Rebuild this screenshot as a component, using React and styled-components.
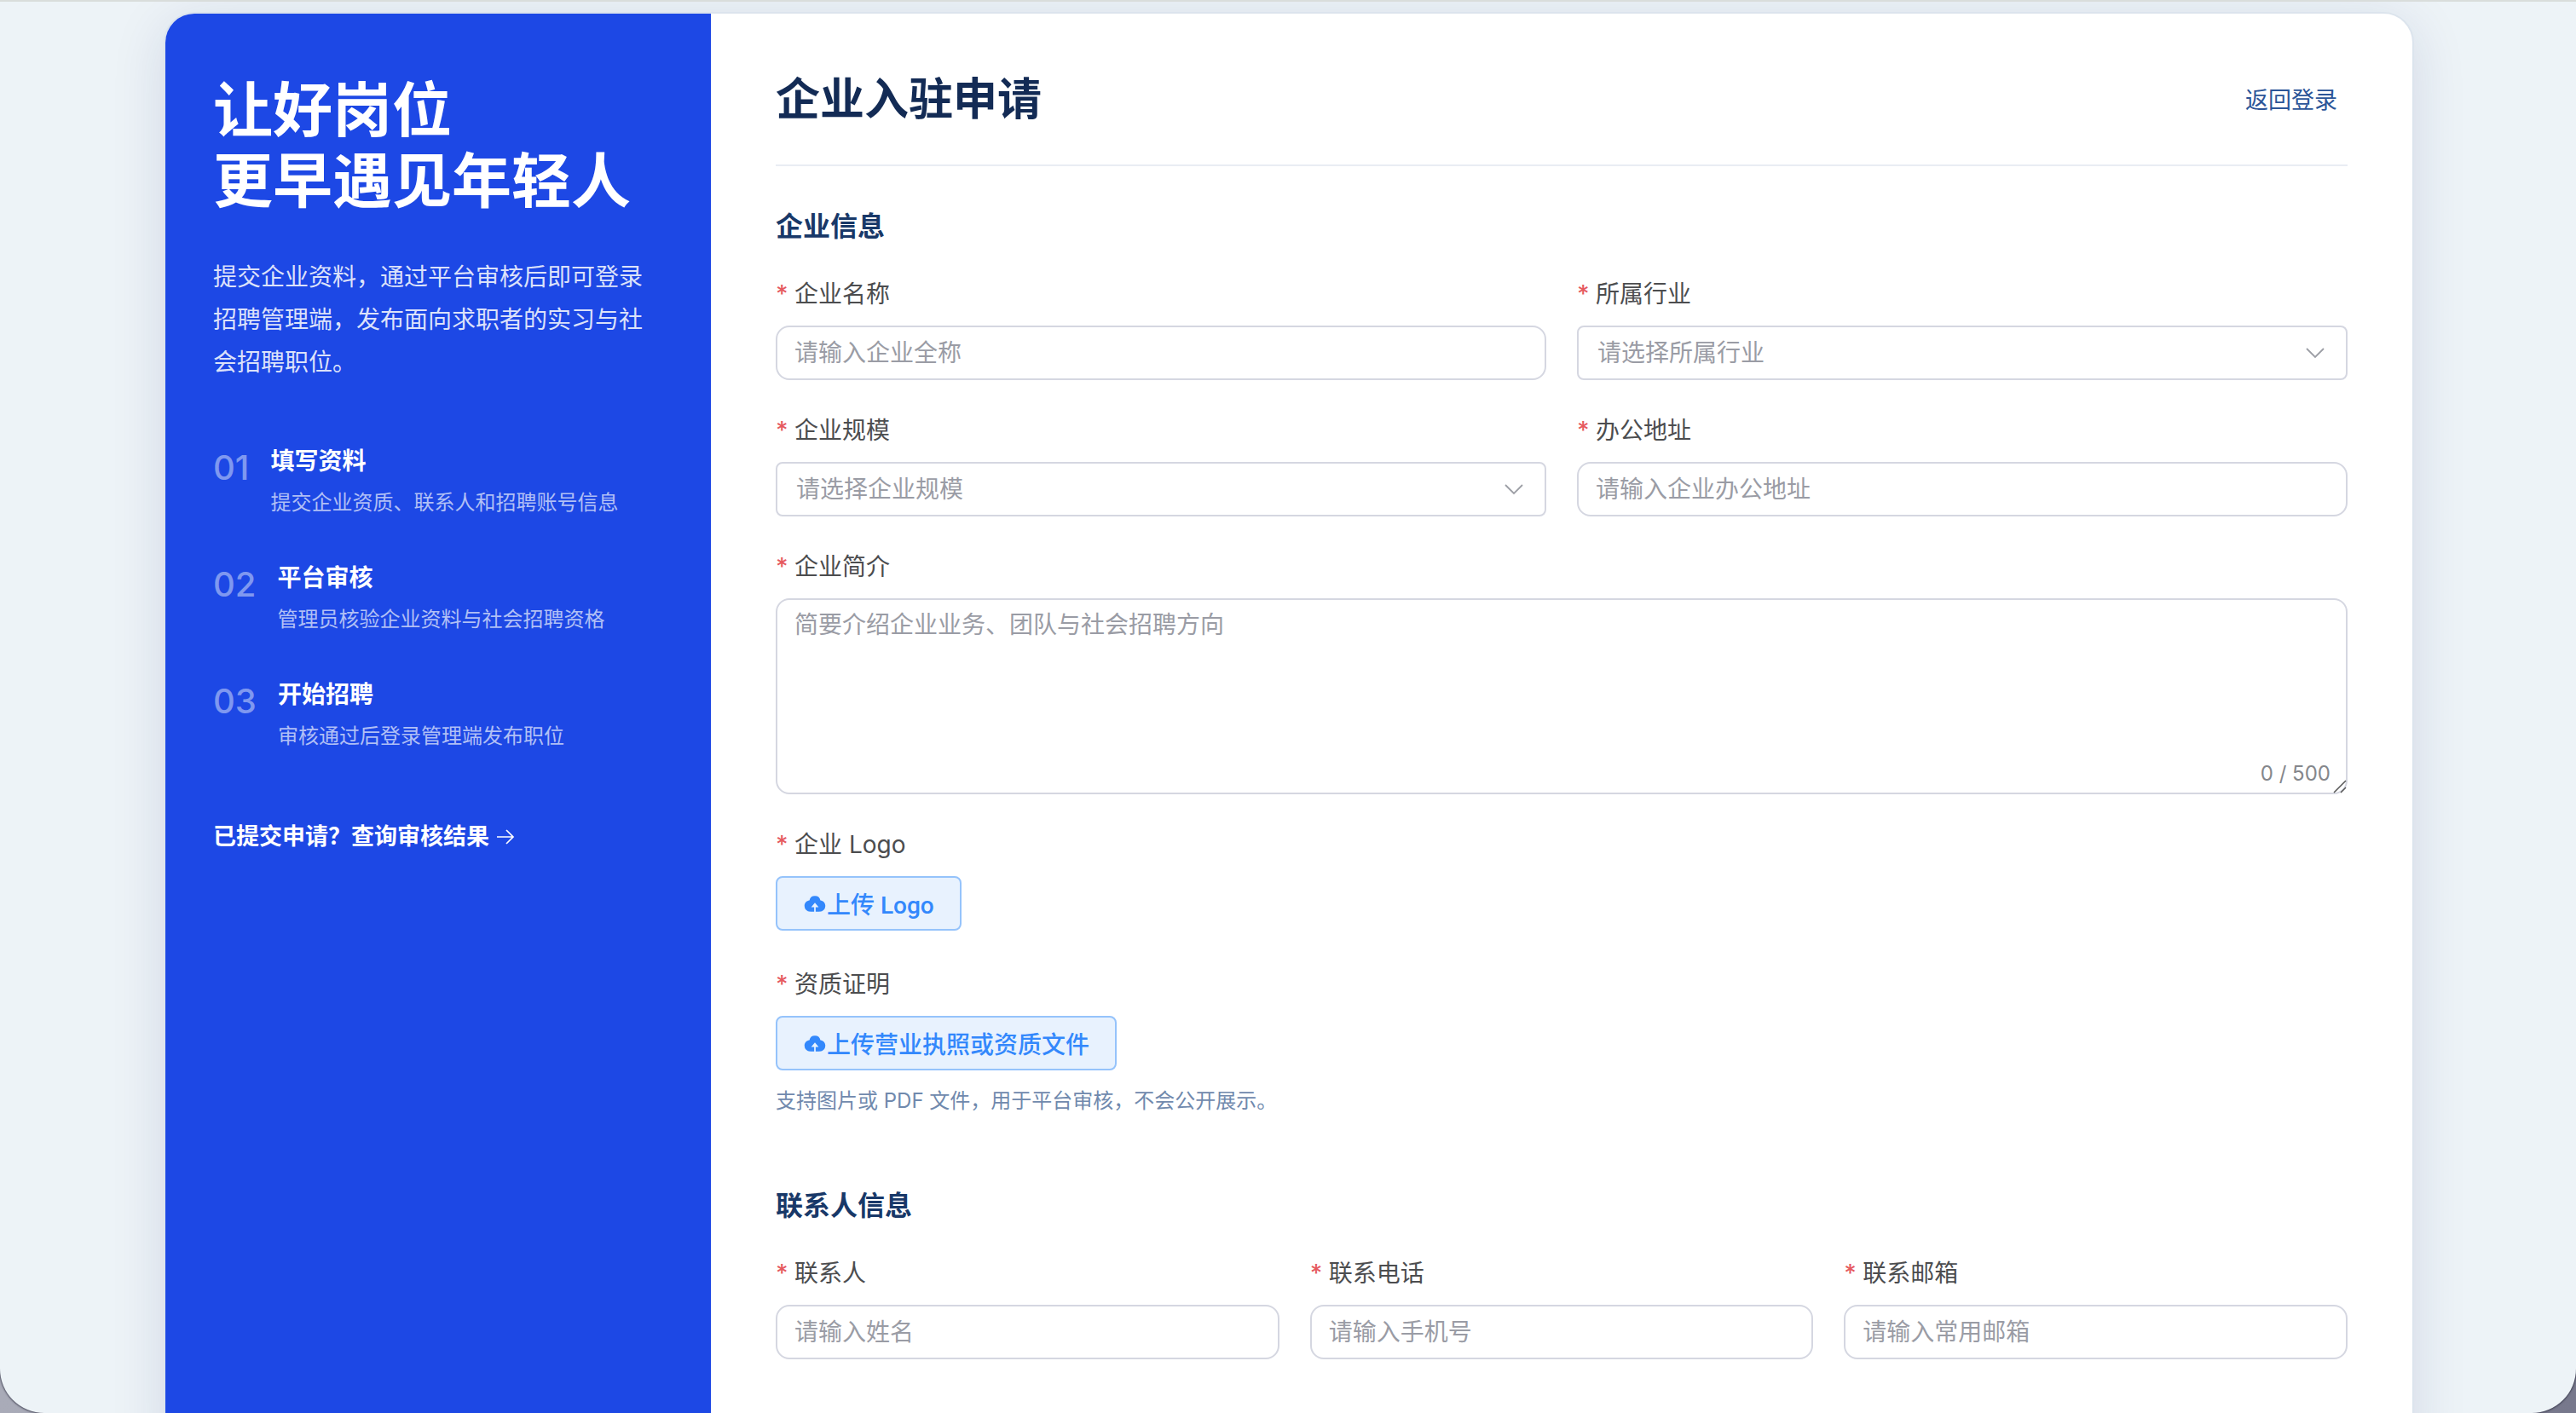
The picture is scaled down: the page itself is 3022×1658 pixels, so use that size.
import React from 'react';
import styled, { createGlobalStyle } from 'styled-components';

const GlobalStyle = createGlobalStyle`
  * {
    box-sizing: border-box;
  }

  body {
    margin: 0;
    background: linear-gradient(to right, #a9abb8, #77788c);
    font-family: Inter, 'Noto Sans CJK SC', sans-serif;
  }

  h1, h2, h3, p, ol {
    margin: 0;
    padding: 0;
  }

  input, select, textarea, button {
    font-family: inherit;
  }
`;

const Page = styled.div`
  height: 100vh;
  overflow: hidden;
  padding: 12px 190px 0 192px;
  border-top: 2px solid #d9dddb;
  border-radius: 0 0 52px 52px;
  background: #edf3f7;
  box-shadow: 0 0 2px 1px rgba(40, 42, 60, 0.7);
`;

const Card = styled.div`
  display: grid;
  grid-template-columns: 640px 1fr;
  overflow: hidden;
  border: 2px solid #dce4ed;
  border-radius: 36px;
  background: #fff;
  box-shadow: 0 12px 64px rgba(28, 36, 110, 0.12);
`;

const Aside = styled.aside`
  padding: 72px 56px;
  background: #1d48e5;
  color: #fff;
`;

const Slogan = styled.h1`
  font-size: 70px;
  font-weight: 700;
  line-height: 83px;
`;

const Intro = styled.p`
  margin-top: 46px;
  font-size: 28px;
  line-height: 50px;
  color: rgba(255, 255, 255, 0.86);
`;

const Steps = styled.ol`
  display: flex;
  flex-direction: column;
  gap: 40px;
  margin-top: 67px;
  list-style: none;
`;

const Step = styled.li`
  display: flex;
  gap: 25px;

  h3 {
    font-size: 28px;
    font-weight: 700;
    line-height: 48px;
  }

  p {
    font-size: 24px;
    line-height: 49px;
    color: rgba(255, 255, 255, 0.66);
  }
`;

const StepNumber = styled.span`
  font-size: 40px;
  font-weight: 500;
  line-height: 64px;
  color: rgba(255, 255, 255, 0.44);
`;

const ResultLink = styled.a`
  display: flex;
  align-items: center;
  gap: 8px;
  margin-top: 74px;
  font-size: 27px;
  font-weight: 700;
  line-height: 40px;
  color: #fff;
  text-decoration: none;
`;

const Main = styled.main`
  padding: 60px 76px 120px;
`;

const Header = styled.header`
  display: flex;
  align-items: center;
  justify-content: space-between;
  padding-bottom: 35px;
  border-bottom: 2px solid #e9edf3;

  h2 {
    font-size: 52px;
    font-weight: 700;
    line-height: 82px;
    color: #132b55;
  }

  a {
    padding: 0 12px 4px;
    font-size: 27px;
    color: #2b5598;
    text-decoration: none;
  }
`;

const Section = styled.section`
  margin-top: ${props => props.$gap}px;

  > h3 {
    margin-bottom: 36px;
    font-size: 32px;
    font-weight: 700;
    line-height: 40px;
    color: #183868;
  }
`;

const Grid = styled.div`
  display: grid;
  grid-template-columns: repeat(${props => props.$columns}, 1fr);
  gap: 36px;
`;

const Field = styled.div`
  grid-column: ${props => (props.$wide ? '1 / -1' : 'auto')};
  padding-bottom: ${props => (props.$upload ? 4 : 0)}px;
`;

const Label = styled.label`
  display: flex;
  gap: 6px;
  margin-bottom: 14px;
  font-size: 28px;
  line-height: 46px;
  color: #4c4d4f;

  &::before {
    content: '*';
    width: 16px;
    font-weight: 500;
    color: #e65a5f;
  }
`;

const Input = styled.input`
  display: block;
  width: 100%;
  height: 64px;
  padding: 0 20px;
  border: 2px solid #d5d7e1;
  border-radius: 16px;
  background: #fff;
  font-size: 28px;

  &::placeholder {
    color: #9a9ca5;
    opacity: 1;
  }
`;

const SelectBox = styled.div`
  display: grid;
  align-items: center;

  > * {
    grid-area: 1 / 1;
  }

  svg {
    justify-self: end;
    margin-right: 24px;
    pointer-events: none;
  }
`;

const Select = styled.select`
  appearance: none;
  width: 100%;
  height: 64px;
  padding: 0 22px;
  border: 2px solid #d5d7e1;
  border-radius: 8px;
  background: #fff;
  font-size: 28px;
  color: #9a9ca5;
`;

const TextareaBox = styled.div`
  position: relative;

  svg {
    position: absolute;
    right: 1px;
    bottom: 1px;
    pointer-events: none;
  }
`;

const Textarea = styled.textarea`
  display: block;
  width: 100%;
  height: 230px;
  padding: 8px 20px;
  border: 2px solid #d5d7e1;
  border-radius: 16px;
  resize: none;
  font-size: 28px;
  line-height: 42px;

  &::placeholder {
    color: #9a9ca5;
    opacity: 1;
  }
`;

const Counter = styled.span`
  position: absolute;
  right: 20px;
  bottom: 10px;
  font-size: 24px;
  line-height: 28px;
  color: #85878c;
`;

const UploadButton = styled.button`
  display: flex;
  align-items: center;
  height: 64px;
  padding: 0 30px;
  border: 2px solid #95c3fb;
  border-radius: 8px;
  background: #e8f2fe;
  font-family: Roboto, 'Noto Sans CJK SC', sans-serif;
  font-size: 28px;
  font-weight: 500;
  color: #3388fc;
`;

const Hint = styled.p`
  margin-top: 18px;
  font-size: 24px;
  line-height: 36px;
  color: #7089ad;
`;

const steps = [
  { number: '01', title: '填写资料', text: '提交企业资质、联系人和招聘账号信息' },
  { number: '02', title: '平台审核', text: '管理员核验企业资料与社会招聘资格' },
  { number: '03', title: '开始招聘', text: '审核通过后登录管理端发布职位' }
];

const contacts = [
  { id: 'contact', label: '联系人', placeholder: '请输入姓名', type: 'text' },
  { id: 'phone', label: '联系电话', placeholder: '请输入手机号', type: 'tel' },
  { id: 'email', label: '联系邮箱', placeholder: '请输入常用邮箱', type: 'email' }
];

const ArrowDown = () => (
  <svg width='28' height='28' viewBox='0 0 28 28' fill='none' stroke='#9c9ea5' strokeWidth='1.8'>
    <path d='M4 9 L14 19 L24 9' />
  </svg>
);

const ArrowRight = () => (
  <svg width='22' height='22' viewBox='0 0 22 22' fill='none' stroke='#fff' strokeWidth='1.7'>
    <path d='M1 11 H20 M12 3 L20 11 L12 19' />
  </svg>
);

const UploadIcon = () => (
  <svg width='28' height='28' viewBox='0 0 1024 1024' fill='currentColor'>
    <path d='M544 864V672h128L512 480 352 672h128v192H320v-1.6c-5.376.32-10.496 1.6-16 1.6A240 240 0 0 1 64 624c0-123.136 93.12-223.488 212.608-237.248A239.808 239.808 0 0 1 512 192a239.872 239.872 0 0 1 235.456 194.752c119.488 13.76 212.48 114.112 212.48 237.248a240 240 0 0 1-240 240c-5.376 0-10.56-1.28-16-1.6v1.6z' />
  </svg>
);

const SelectField = ({ id, label, placeholder }) => (
  <Field>
    <Label htmlFor={id}>{label}</Label>
    <SelectBox>
      <Select id={id} name={id} defaultValue=''>
        <option value=''>{placeholder}</option>
      </Select>
      <ArrowDown />
    </SelectBox>
  </Field>
);

const InputField = ({ id, label, placeholder, type }) => (
  <Field>
    <Label htmlFor={id}>{label}</Label>
    <Input id={id} name={id} type={type || 'text'} placeholder={placeholder} />
  </Field>
);

class App extends React.Component {
  constructor(props) {
    super(props);
    this.state = {
      profile: ''
    }
    this.handleProfile = this.handleProfile.bind(this);
  }

  handleProfile(e) {
    this.setState({ profile: e.target.value });
  }

  render() {
    return (
      <Page>
        <GlobalStyle />
        <Card>
          <Aside>
            <Slogan>让好岗位<br/>更早遇见年轻人</Slogan>
            <Intro>提交企业资料，通过平台审核后即可登录招聘管理端，发布面向求职者的实习与社会招聘职位。</Intro>
            <Steps>
              {steps.map(step => (
                <Step key={step.number}>
                  <StepNumber>{step.number}</StepNumber>
                  <div>
                    <h3>{step.title}</h3>
                    <p>{step.text}</p>
                  </div>
                </Step>
              ))}
            </Steps>
            <ResultLink href='#result'>
              已提交申请？查询审核结果
              <ArrowRight />
            </ResultLink>
          </Aside>
          <Main>
            <Header>
              <h2>企业入驻申请</h2>
              <a href='#login'>返回登录</a>
            </Header>
            <form>
              <Section $gap={51}>
                <h3>企业信息</h3>
                <Grid $columns={2}>
                  <InputField id='name' label='企业名称' placeholder='请输入企业全称' />
                  <SelectField id='industry' label='所属行业' placeholder='请选择所属行业' />
                  <SelectField id='scale' label='企业规模' placeholder='请选择企业规模' />
                  <InputField id='address' label='办公地址' placeholder='请输入企业办公地址' />
                  <Field $wide>
                    <Label htmlFor='profile'>企业简介</Label>
                    <TextareaBox>
                      <Textarea
                        id='profile'
                        name='profile'
                        maxLength={500}
                        placeholder='简要介绍企业业务、团队与社会招聘方向'
                        value={this.state.profile}
                        onChange={this.handleProfile}
                      />
                      <Counter>{this.state.profile.length} / 500</Counter>
                      <svg width='16' height='16' viewBox='0 0 16 16' fill='none' stroke='#555' strokeWidth='1.5'>
                        <path d='M1 15 L15 1 M9 15 L15 9' />
                      </svg>
                    </TextareaBox>
                  </Field>
                  <Field $wide $upload>
                    <Label htmlFor='logo'>企业 Logo</Label>
                    <UploadButton id='logo' type='button'><UploadIcon />上传 Logo</UploadButton>
                  </Field>
                  <Field $wide>
                    <Label htmlFor='license'>资质证明</Label>
                    <UploadButton id='license' type='button'><UploadIcon />上传营业执照或资质文件</UploadButton>
                    <Hint>支持图片或 PDF 文件，用于平台审核，不会公开展示。</Hint>
                  </Field>
                </Grid>
              </Section>
              <Section $gap={85}>
                <h3>联系人信息</h3>
                <Grid $columns={3}>
                  {contacts.map(item => <InputField key={item.id} {...item} />)}
                </Grid>
              </Section>
            </form>
          </Main>
        </Card>
      </Page>
    )
  }
};

export default App;
